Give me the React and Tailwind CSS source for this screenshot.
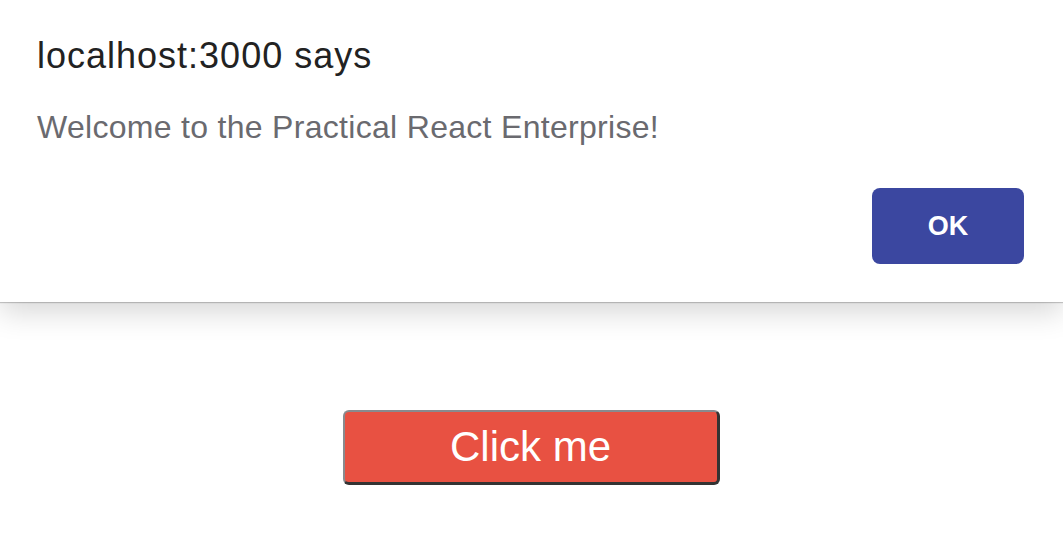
import React from "react";

const AlertDialog = ({ origin, message }) => {
  return (
    <div className="w-full h-[302px] bg-white flex flex-col px-[37px] pt-[36px] shadow-[0_1px_1px_rgba(0,0,0,0.2),0_10px_28px_rgba(0,0,0,0.16)] relative z-10">
      <h1 className="text-[36px] leading-[40px] tracking-[1px] text-[#222222] font-['Liberation_Sans',Arial,sans-serif]">
        {origin} says
      </h1>
      <p className="mt-[32px] text-[32px] leading-[38px] tracking-[0.3px] text-[#6a6a6f] font-['Liberation_Sans',Arial,sans-serif]">
        {message}
      </p>
      <div className="flex justify-end mt-[42px] mr-[2px]">
        <button className="w-[152px] h-[76px] rounded-[8px] bg-[#3b47a0] text-white text-[27px] font-bold font-['Liberation_Sans',Arial,sans-serif]">
          OK
        </button>
      </div>
    </div>
  );
};

export default function App() {
  return (
    <div className="min-h-[543px] bg-white flex flex-col">
      <AlertDialog
        origin="localhost:3000"
        message="Welcome to the Practical React Enterprise!"
      />
      <div className="flex justify-center mt-[108px]">
        <button className="w-[377px] h-[75px] bg-[#e85142] text-white text-[42px] leading-none font-['Liberation_Sans',Arial,sans-serif] rounded-[6px] border-t-2 border-l-2 border-[#8a8a8e] border-b-[3px] border-r-[3px] border-b-[#333333] border-r-[#333333] -ml-[1px]">
          Click me
        </button>
      </div>
    </div>
  );
}
